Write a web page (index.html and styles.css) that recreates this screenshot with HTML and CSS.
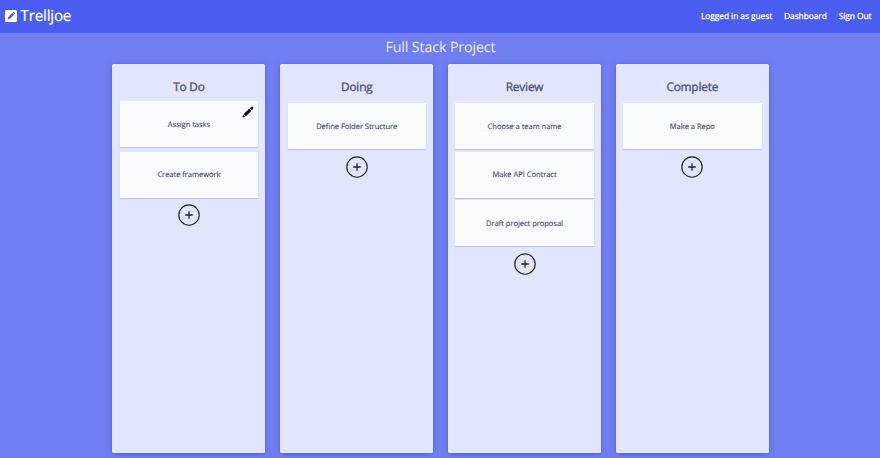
FILE: index.html
```html
<!DOCTYPE html>
<html lang="en">
<head>
<meta charset="utf-8">
<title>Trelljoe</title>
<link rel="stylesheet" href="styles.css">
</head>
<body>
<svg class="defs" width="0" height="0" aria-hidden="true">
  <symbol id="plus" viewBox="0 0 22 22"><circle cx="11" cy="11" r="10.2" fill="none" stroke="#20202e" stroke-width="1.15"/><path d="M11 7.2v7.6M7.2 11h7.6" stroke="#20202e" stroke-width="1.3"/></symbol>
</svg>
<header class="nav">
  <a class="brand">
    <svg class="logo" viewBox="0 0 12 12"><rect width="12" height="12" rx="1.5" fill="#fff"/><path d="M2.6 9.4l.7-2.5 3.9-3.9 1.8 1.8-3.9 3.9zM7.6 2.6l.5-.4q.5-.4 1 0l.7.7q.4.5 0 1l-.4.5z" fill="#4c5df1"/></svg>
    <span>Trelljoe</span>
  </a>
  <nav class="links"><a>Logged in as guest</a><a>Dashboard</a><a>Sign Out</a></nav>
</header>
<main>
  <h1>Full Stack Project</h1>
  <div class="board">
    <section class="column lifted">
      <h2>To Do</h2>
      <div class="card">Assign tasks
        <svg class="pencil" viewBox="0 0 12 12"><path d="M.4 11.6l.6-2.9 2.3 2.3zM1.6 7.9l5.6-5.2 2.2 2.3-5.5 5.3zM7.9 2.1l1.3-1.2q.9-.8 1.8.1t.1 1.8L9.9 4.2z" fill="#15151f"/></svg>
      </div>
      <div class="card">Create framework</div>
      <svg class="add"><use href="#plus"/></svg>
    </section>
    <section class="column">
      <h2>Doing</h2>
      <div class="card">Define Folder Structure</div>
      <svg class="add"><use href="#plus"/></svg>
    </section>
    <section class="column">
      <h2>Review</h2>
      <div class="card">Choose a team name</div>
      <div class="card">Make API Contract</div>
      <div class="card">Draft project proposal</div>
      <svg class="add"><use href="#plus"/></svg>
    </section>
    <section class="column">
      <h2>Complete</h2>
      <div class="card">Make a Repo</div>
      <svg class="add"><use href="#plus"/></svg>
    </section>
  </div>
</main>
</body>
</html>
```
FILE: styles.css
```css
* { box-sizing: border-box; }
body {
  margin: 0;
  height: 458px;
  overflow: hidden;
  background: #717ef2;
  font-family: "Open Sans", "Noto Sans", sans-serif;
  text-rendering: geometricPrecision;
}
.defs { display: none; }
.nav {
  height: 33px;
  padding: 0 8.5px 1px 5px;
  display: flex;
  align-items: center;
  justify-content: space-between;
  background: #4c5df1;
  color: #fff;
}
.brand { display: flex; align-items: center; gap: 3.5px; font-size: 15.2px; line-height: 30px; letter-spacing: -.2px; -webkit-text-stroke: .2px currentColor; }
.logo { width: 12px; height: 12px; }
.links { display: flex; gap: 12px; padding-top: 1px; font-size: 8.4px; line-height: 32px; letter-spacing: -.06px; -webkit-text-stroke: .25px currentColor; }
h1 {
  margin: 0;
  height: 31px;
  padding-left: 1px;
  line-height: 29.5px;
  text-align: center;
  font-size: 14.2px;
  font-weight: 400;
  letter-spacing: -.1px;
  color: #e2e5fe;
  -webkit-text-stroke: .1px currentColor;
}
.board { display: flex; gap: 14.8px; margin-left: 112.45px; }
.column {
  width: 153px;
  height: 388.5px;
  padding: 8px 7.3px 0;
  display: flex;
  flex-direction: column;
  align-items: center;
  border-radius: 1.5px;
  background: #e1e5fe;
  box-shadow: 0 1px 5px rgba(50, 60, 180, .45);
}
h2 {
  margin: 0;
  height: 31.2px;
  line-height: 31px;
  font-size: 11.8px;
  font-weight: 400;
  letter-spacing: -.15px;
  color: #505575;
  -webkit-text-stroke: .35px currentColor;
}
.card {
  position: relative;
  width: 100%;
  height: 46.2px;
  flex-shrink: 0;
  margin-bottom: 2.3px;
  padding-top: 1.2px;
  display: flex;
  align-items: center;
  justify-content: center;
  border-radius: 1px;
  background: #f9fdfe;
  color: #424873;
  font-size: 7.6px;
  letter-spacing: -.06px;
  -webkit-text-stroke: .12px currentColor;
  box-shadow: 0 1px 1px rgba(60, 65, 120, .22);
}
.lifted .card:first-of-type { top: -2.2px; }
.pencil { position: absolute; top: 4.7px; right: 4.5px; width: 12px; height: 12px; }
.add { width: 22px; height: 22px; flex-shrink: 0; margin-top: 4px; }
```
